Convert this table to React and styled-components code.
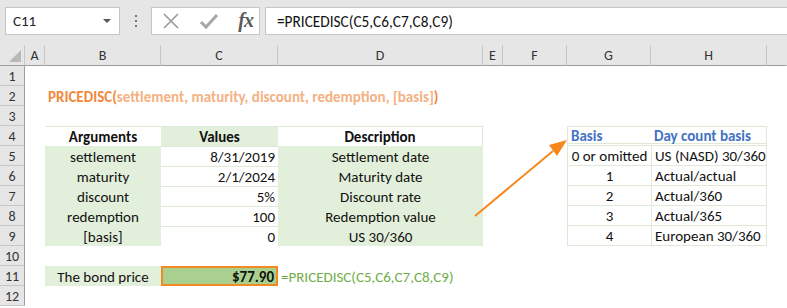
import React from "react";
import styled, { createGlobalStyle } from "styled-components";

const Global = createGlobalStyle`
  html, body { margin: 0; padding: 0; background: #ffffff; }
  body { font-family: Carlito, Calibri, Lato, "Open Sans", "Liberation Sans", sans-serif; }
`;

const Page = styled.div`
  position: relative;
  width: 787px;
  height: 308px;
  overflow: hidden;
  background: #ffffff;
`;

const TopBar = styled.div`
  height: 45px;
  background: #e6e6e6;
  display: flex;
  align-items: flex-start;
  padding-top: 7px;
  box-sizing: border-box;
`;

const Box = styled.div`
  height: 28px;
  box-sizing: border-box;
  background: #ffffff;
  border: 1px solid #c6c6c6;
  display: flex;
  align-items: center;
`;

const NameBox = styled(Box)`
  margin-left: 5px;
  width: 115px;
  padding: 0 8px 0 7px;
  justify-content: space-between;
  font-size: 15px;
  color: #222;
`;

const Caret = styled.span`
  width: 0;
  height: 0;
  border-left: 4px solid transparent;
  border-right: 4px solid transparent;
  border-top: 4px solid #555;
`;

const Dots = styled.div`
  width: 31px;
  height: 28px;
  display: flex;
  flex-direction: column;
  align-items: center;
  justify-content: center;
  gap: 3px;
  & > span {
    width: 2px;
    height: 2px;
    background: #777;
  }
`;

const FxBox = styled(Box)`
  width: 109px;
  padding: 0 6px 0 10px;
  justify-content: space-between;
`;

const Fx = styled.span`
  font-family: "Liberation Serif", "DejaVu Serif", serif;
  font-style: italic;
  font-weight: bold;
  font-size: 20px;
  color: #5a5a5a;
  letter-spacing: -1px;
  margin-top: -2px;
`;

const FormulaBox = styled(Box)`
  margin-left: 5px;
  flex: 1;
  border-right: none;
  padding-left: 11px;
  font-size: 15.3px;
  color: #111;
`;

const Grid = styled.div`
  display: grid;
  grid-template-columns: 25px 20px 116px 117px 205px 20px 64px 84px 116px 1fr;
  grid-template-rows: 21px repeat(12, 20px);
`;

const ColHead = styled.div`
  background: #e6e6e6;
  border-bottom: 1px solid #9e9e9e;
  border-right: 1px solid ${(p) => (p.$last ? "transparent" : "#c6c6c6")};
  box-sizing: border-box;
  display: flex;
  align-items: center;
  justify-content: center;
  font-size: 14px;
  color: #333;
  position: relative;
`;

const Corner = styled(ColHead)`
  &::after {
    content: "";
    position: absolute;
    right: 3px;
    bottom: 3px;
    width: 0;
    height: 0;
    border-left: 12px solid transparent;
    border-bottom: 12px solid #b8b8b8;
  }
`;

const RowHead = styled.div`
  background: #e6e6e6;
  border-right: 1px solid #9e9e9e;
  border-bottom: 1px solid #c6c6c6;
  box-sizing: border-box;
  display: flex;
  align-items: center;
  justify-content: center;
  font-size: 14px;
  color: #333;
  padding-top: 1px;
`;

const Cell = styled.div`
  box-sizing: border-box;
  background: ${(p) => p.$bg || "transparent"};
  display: flex;
  align-items: center;
  justify-content: ${(p) =>
    p.$align === "right" ? "flex-end" : p.$align === "center" ? "center" : "flex-start"};
  padding: 1px 3px 0 3px;
  font-size: 15px;
  font-weight: ${(p) => (p.$bold ? 700 : 400)};
  color: ${(p) => p.$color || "#111"};
  white-space: nowrap;
  overflow: visible;
  border-top: ${(p) => (p.$bt ? `1px solid ${p.$bt}` : "none")};
  border-bottom: ${(p) => (p.$bb ? p.$bb : "none")};
  border-left: ${(p) => (p.$bl ? `1px solid ${p.$bl}` : "none")};
  border-right: ${(p) => (p.$br ? `1px solid ${p.$br}` : "none")};
  z-index: ${(p) => (p.$over ? 1 : 0)};
`;

const Result = styled(Cell)`
  border: 2px solid #f28a22;
  padding-right: 2px;
`;

const Title = styled.span`
  color: #f4b183;
  & > b {
    color: #f08a3c;
  }
`;

const Arrow = styled.svg`
  position: absolute;
  left: 0;
  top: 0;
  pointer-events: none;
`;

const GREEN = "#e2efda";
const LINE = "#dfe9d8";
const BLUE = "#4472c4";

const cols = ["A", "B", "C", "D", "E", "F", "G", "H", ""];

const args = [
  ["settlement", "8/31/2019", "Settlement date"],
  ["maturity", "2/1/2024", "Maturity date"],
  ["discount", "5%", "Discount rate"],
  ["redemption", "100", "Redemption value"],
  ["[basis]", "0", "US 30/360"],
];

const basis = [
  ["0 or omitted", "US (NASD) 30/360"],
  ["1", "Actual/actual"],
  ["2", "Actual/360"],
  ["3", "Actual/365"],
  ["4", "European 30/360"],
];

function Empty({ n }) {
  return Array.from({ length: n }).map((_, i) => <Cell key={i} />);
}

export default function App() {
  const rows = [];
  for (let r = 1; r <= 12; r++) {
    const cells = [<RowHead key="h">{r}</RowHead>];
    if (r === 2) {
      cells.push(<Cell key="a" />);
      cells.push(
        <Cell key="b" $bold $over>
          <Title>
            <b>PRICEDISC(</b>settlement, maturity, discount, redemption, [basis]<b>)</b>
          </Title>
        </Cell>
      );
      cells.push(<Empty key="e" n={7} />);
    } else if (r === 4) {
      cells.push(<Cell key="a" />);
      cells.push(<Cell key="b" $bold $align="center" $bt={LINE}>Arguments</Cell>);
      cells.push(<Cell key="c" $bold $align="center" $bg={GREEN} $bt={LINE}>Values</Cell>);
      cells.push(<Cell key="d" $bold $align="center" $bt={LINE} $br={LINE}>Description</Cell>);
      cells.push(<Cell key="e" />);
      cells.push(<Cell key="f" />);
      cells.push(
        <Cell key="g" $bold $color={BLUE} $bt={LINE} $bl={LINE} $bb={`3px double ${LINE}`}>Basis</Cell>
      );
      cells.push(
        <Cell key="h" $bold $color={BLUE} $bt={LINE} $br={LINE} $bb={`3px double ${LINE}`}>
          Day count basis
        </Cell>
      );
      cells.push(<Cell key="i" />);
    } else if (r >= 5 && r <= 9) {
      const [a, v, d] = args[r - 5];
      const [g, h] = basis[r - 5];
      cells.push(<Cell key="a" />);
      cells.push(<Cell key="b" $align="center" $bg={GREEN}>{a}</Cell>);
      cells.push(<Cell key="c" $align="right" $bt={LINE}>{v}</Cell>);
      cells.push(<Cell key="d" $align="center" $bg={GREEN}>{d}</Cell>);
      cells.push(<Cell key="e" />);
      cells.push(<Cell key="f" />);
      cells.push(
        <Cell key="g" $align="center" $bl={LINE} $bb={`1px solid ${LINE}`}>{g}</Cell>
      );
      cells.push(
        <Cell key="h" $br={LINE} $bl={LINE} $bb={`1px solid ${LINE}`}>{h}</Cell>
      );
      cells.push(<Cell key="i" />);
    } else if (r === 11) {
      cells.push(<Cell key="a" />);
      cells.push(<Cell key="b" $align="center" $bg={GREEN}>The bond price</Cell>);
      cells.push(<Result key="c" $align="right" $bold $bg="#a9d08e">$77.90</Result>);
      cells.push(<Cell key="d" $color="#70ad47" $over>=PRICEDISC(C5,C6,C7,C8,C9)</Cell>);
      cells.push(<Empty key="e" n={5} />);
    } else {
      cells.push(<Empty key="e" n={9} />);
    }
    rows.push(<React.Fragment key={r}>{cells}</React.Fragment>);
  }

  return (
    <Page>
      <Global />
      <TopBar>
        <NameBox>
          <span>C11</span>
          <Caret />
        </NameBox>
        <Dots>
          <span />
          <span />
          <span />
        </Dots>
        <FxBox>
          <svg width="18" height="18" viewBox="0 0 18 18">
            <path d="M2 2 L16 16 M16 2 L2 16" stroke="#9a9a9a" strokeWidth="1.6" fill="none" />
          </svg>
          <svg width="20" height="18" viewBox="0 0 20 18">
            <path d="M2 10 L7 15 L18 3" stroke="#a6a6a6" strokeWidth="3" fill="none" strokeLinejoin="miter" />
          </svg>
          <Fx>fx</Fx>
        </FxBox>
        <FormulaBox>=PRICEDISC(C5,C6,C7,C8,C9)</FormulaBox>
      </TopBar>
      <Grid>
        <Corner />
        {cols.map((c, i) => (
          <ColHead key={i} $last={i === cols.length - 1}>{c}</ColHead>
        ))}
        {rows}
      </Grid>
      <Arrow width="787" height="308" viewBox="0 0 787 308">
        <line x1="475" y1="216" x2="553" y2="151" stroke="#f7861c" strokeWidth="2" />
        <polygon points="567,140 549,145 557,156" fill="#f7861c" />
      </Arrow>
    </Page>
  );
}
